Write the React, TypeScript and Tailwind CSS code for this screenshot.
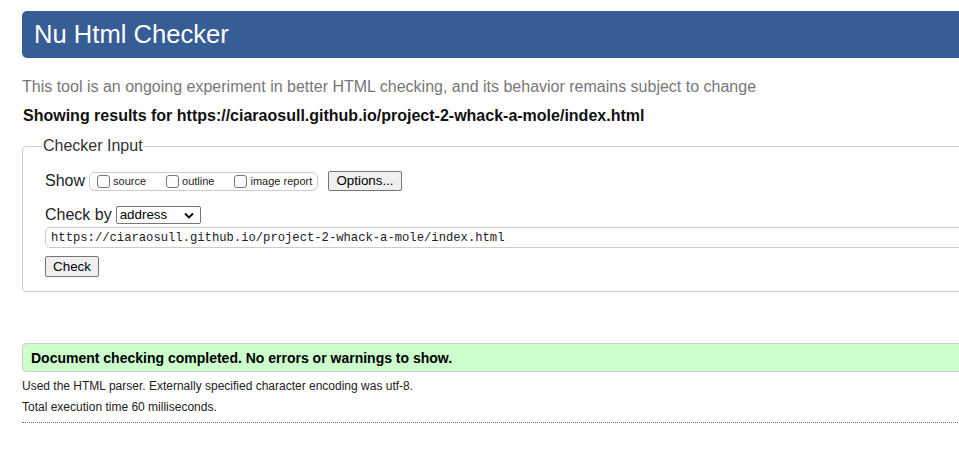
import React from 'react';

const url = 'https://ciaraosull.github.io/project-2-whack-a-mole/index.html';

const Box: React.FC<{ label: string }> = ({ label }) => (
  <span className="flex items-center whitespace-nowrap">
    <span className="ml-[4px] mr-[3px] h-[13px] w-[13px] shrink-0 rounded-[3px] border border-[#767676] bg-white"></span>
    <span className="text-[11px] leading-[13px] text-[#222]">{label}</span>
  </span>
);

const Button: React.FC<{ children: React.ReactNode; className?: string }> = ({ children, className }) => (
  <span
    className={`flex items-center justify-center rounded-[2px] border border-[#767676] bg-[#efefef] text-[13.33px] text-black ${className || ''}`}
  >
    {children}
  </span>
);

export default function App() {
  return (
    <div className="h-[464px] w-[959px] overflow-hidden bg-white font-['Liberation_Sans',Arial,sans-serif] text-[#222]">
      <div className="ml-[22px] w-[1100px] pt-[11px]">
        {/* page title */}
        <h1 className="h-[47px] rounded-l-[5px] bg-[#365d95] pl-[12px] text-[25.6px] leading-[47px] text-white">
          Nu Html Checker
        </h1>

        <p className="mt-[19px] text-[16px] leading-[20px] text-[#777]">
          This tool is an ongoing experiment in better HTML checking, and its behavior remains subject to change
        </p>
        <p className="mt-[9px] pl-[1px] text-[16px] font-bold leading-[20px] text-[#111]">
          Showing results for {url}
        </p>

        {/* checker form */}
        <fieldset className="mt-[10px] rounded-[4px] border border-[#ccc] px-[22px] pb-[14px]">
          <legend className="-ml-[3px] px-[1px] text-[16px] leading-[20px] text-[#333]">Checker Input</legend>

          <div className="mt-[15px] flex h-[20px] items-center">
            <span className="text-[16px] leading-[20px] text-[#222]">Show</span>
            <span className="ml-[4px] flex h-[19px] w-[229px] items-center gap-[16px] rounded-[6px] border border-[#ccc] pl-[3px]">
              <Box label="source" />
              <Box label="outline" />
              <Box label="image report" />
            </span>
            <Button className="ml-[10px] h-[20px] w-[74px]">Options...</Button>
          </div>

          <div className="mt-[14px] flex h-[20px] items-center">
            <span className="text-[16px] leading-[20px] text-[#222]">Check by</span>
            <span className="ml-[4px] flex h-[18px] w-[85px] items-center justify-between rounded-[2px] border border-[#767676] bg-white pl-[3px] pr-[6px]">
              <span className="text-[13.33px] leading-[16px] text-black">address</span>
              <svg width="10" height="7" viewBox="0 0 10 7">
                <path d="M1 1.5 L5 5.5 L9 1.5" fill="none" stroke="#000" strokeWidth="1.8" />
              </svg>
            </span>
          </div>

          <div className="mt-[2px] flex h-[21px] items-center rounded-[5px] border border-[#ccc] pl-[5px]">
            <span className="font-['Liberation_Mono','DejaVu_Sans_Mono',monospace] text-[12.2px] leading-[16px] text-[#222]">
              {url}
            </span>
          </div>

          <Button className="mt-[8px] h-[21px] w-[54px]">Check</Button>
        </fieldset>

        {/* result */}
        <div className="mt-[51px] flex h-[29px] items-center rounded-[4px] border border-[#ccc] bg-[#ccffcc] pl-[8px]">
          <span className="text-[14px] font-bold leading-[18px] text-black">
            Document checking completed. No errors or warnings to show.
          </span>
        </div>
        <p className="mt-[6px] text-[12px] leading-[16px] text-[#222]">
          Used the HTML parser. Externally specified character encoding was utf-8.
        </p>
        <p className="mt-[5px] text-[12px] leading-[16px] text-[#222]">Total execution time 60 milliseconds.</p>
        <div className="mt-[7px] border-t border-dotted border-[#777]"></div>
      </div>
    </div>
  );
}
